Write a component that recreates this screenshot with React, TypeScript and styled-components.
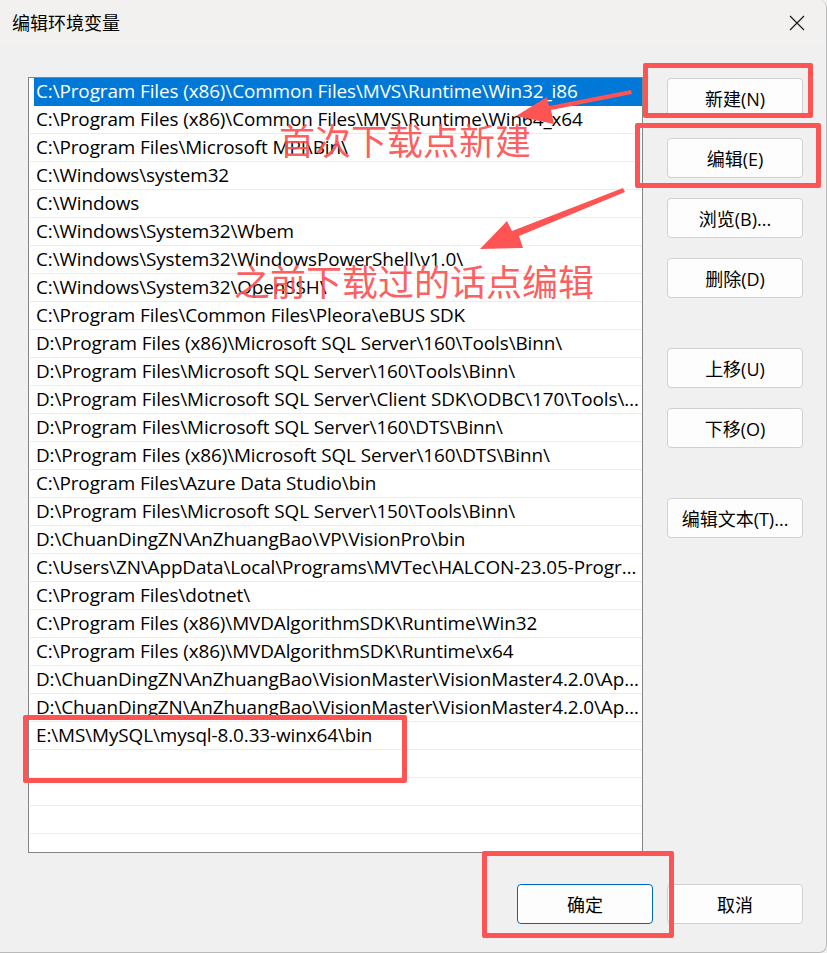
import styled, { createGlobalStyle } from 'styled-components';

const GlobalStyle = createGlobalStyle`
    html, body {
        margin: 0;
        padding: 0;
        background: #f0f0f0;
    }
    * { box-sizing: border-box; }
`

const UI_FONT = `"Segoe UI", "Open Sans", "Noto Sans CJK SC", sans-serif`

const StyledWindow = styled.div`
    position: relative;
    width: 827px;
    height: 953px;
    background-color: #f0f0f0;
    font-family: ${UI_FONT};
    color: #000;
    overflow: hidden;
    border-right: 1px solid #b9b9b9;
    border-bottom: 1px solid #b9b9b9;
    border-radius: 0 8px 8px 0;
`

const StyledTitleBar = styled.div`
    height: 45px;
    display: flex;
    align-items: center;
    justify-content: space-between;
    padding: 0 14px 0 12px;
    background-color: #f3f1ef;
`

const StyledTitle = styled.span`
    font-size: 18px;
    font-family: "Noto Sans CJK SC", sans-serif;
    margin-top: -2px;
`

const StyledClose = styled.button`
    width: 30px;
    height: 30px;
    border: none;
    background: transparent;
    padding: 0;
    display: flex;
    align-items: center;
    justify-content: center;
`

const StyledContent = styled.div`
    display: flex;
    align-items: flex-start;
    padding: 32px 0 0 28px;
`

const StyledList = styled.div`
    width: 615px;
    height: 776px;
    border: 1px solid #858585;
    background-color: #fff;
    overflow: hidden;
    padding-left: 1px;
`

const StyledRow = styled.div<{ $selected?: boolean }>`
    height: 28px;
    line-height: 27px;
    margin-left: ${p => p.$selected ? '4px' : '0'};
    padding-left: ${p => p.$selected ? '2px' : '6px'};
    padding-right: 2px;
    font-size: 18.9px;
    letter-spacing: -0.1px;
    white-space: nowrap;
    overflow: hidden;
    text-overflow: ellipsis;
    background-color: ${p => p.$selected ? '#0078d7' : 'transparent'};
    color: ${p => p.$selected ? '#fff' : '#000'};
    border-bottom: 1px solid ${p => p.$selected ? '#0078d7' : '#ececec'};
`

const StyledSide = styled.div`
    display: flex;
    flex-direction: column;
    margin-left: 24px;
    margin-top: 1px;
`

const StyledButton = styled.button<{ $gap?: number; $primary?: boolean }>`
    width: 136px;
    height: 40px;
    margin-top: ${p => p.$gap ?? 0}px;
    border-radius: 4px;
    border: 1px solid ${p => p.$primary ? '#0067c0' : '#d0d0d0'};
    background-color: #fdfdfd;
    font-family: ${UI_FONT};
    font-size: 18px;
    color: #000;
    padding: 0;
`

const StyledFooter = styled.div`
    display: flex;
    justify-content: flex-end;
    gap: 14px;
    padding: 31px 23px 0 0;
`

const StyledMarkBox = styled.div<{ $x: number; $y: number; $w: number; $h: number }>`
    position: absolute;
    left: ${p => p.$x}px;
    top: ${p => p.$y}px;
    width: ${p => p.$w}px;
    height: ${p => p.$h}px;
    border: 5px solid #fe5454;
    border-radius: 2px;
    pointer-events: none;
`

const StyledNote = styled.div<{ $x: number; $y: number }>`
    position: absolute;
    left: ${p => p.$x}px;
    top: ${p => p.$y}px;
    font-family: "Noto Sans CJK SC", sans-serif;
    font-size: 36px;
    line-height: 36px;
    color: rgba(252, 80, 80, 0.92);
    white-space: nowrap;
    pointer-events: none;
`

const StyledArrows = styled.svg`
    position: absolute;
    left: 0;
    top: 0;
    pointer-events: none;
`

const paths = [
    'C:\\Program Files (x86)\\Common Files\\MVS\\Runtime\\Win32_i86',
    'C:\\Program Files (x86)\\Common Files\\MVS\\Runtime\\Win64_x64',
    'C:\\Program Files\\Microsoft MPI\\Bin\\',
    'C:\\Windows\\system32',
    'C:\\Windows',
    'C:\\Windows\\System32\\Wbem',
    'C:\\Windows\\System32\\WindowsPowerShell\\v1.0\\',
    'C:\\Windows\\System32\\OpenSSH\\',
    'C:\\Program Files\\Common Files\\Pleora\\eBUS SDK',
    'D:\\Program Files (x86)\\Microsoft SQL Server\\160\\Tools\\Binn\\',
    'D:\\Program Files\\Microsoft SQL Server\\160\\Tools\\Binn\\',
    'D:\\Program Files\\Microsoft SQL Server\\Client SDK\\ODBC\\170\\Tools\\Binn\\',
    'D:\\Program Files\\Microsoft SQL Server\\160\\DTS\\Binn\\',
    'D:\\Program Files (x86)\\Microsoft SQL Server\\160\\DTS\\Binn\\',
    'C:\\Program Files\\Azure Data Studio\\bin',
    'D:\\Program Files\\Microsoft SQL Server\\150\\Tools\\Binn\\',
    'D:\\ChuanDingZN\\AnZhuangBao\\VP\\VisionPro\\bin',
    'C:\\Users\\ZN\\AppData\\Local\\Programs\\MVTec\\HALCON-23.05-Progress\\bin\\x64-win64',
    'C:\\Program Files\\dotnet\\',
    'C:\\Program Files (x86)\\MVDAlgorithmSDK\\Runtime\\Win32',
    'C:\\Program Files (x86)\\MVDAlgorithmSDK\\Runtime\\x64',
    'D:\\ChuanDingZN\\AnZhuangBao\\VisionMaster\\VisionMaster4.2.0\\Applications\\Module(sp)\\x64',
    'D:\\ChuanDingZN\\AnZhuangBao\\VisionMaster\\VisionMaster4.2.0\\Applications\\ThirdLib',
    'E:\\MS\\MySQL\\mysql-8.0.33-winx64\\bin',
    '',
    '',
    '',
    '',
]

const sideButtons = [
    { label: '新建(N)', gap: 0 },
    { label: '编辑(E)', gap: 20 },
    { label: '浏览(B)...', gap: 20 },
    { label: '删除(D)', gap: 20 },
    { label: '上移(U)', gap: 50 },
    { label: '下移(O)', gap: 20 },
    { label: '编辑文本(T)...', gap: 50 },
]

export default function App() {
    return (
        <>
            <GlobalStyle />
            <StyledWindow>
                <StyledTitleBar>
                    <StyledTitle>编辑环境变量</StyledTitle>
                    <StyledClose aria-label="关闭">
                        <svg width="16" height="16" viewBox="0 0 16 16">
                            <path d="M1 1 L15 15 M15 1 L1 15" stroke="#1a1a1a" strokeWidth="1.2" fill="none" />
                        </svg>
                    </StyledClose>
                </StyledTitleBar>

                <StyledContent>
                    <StyledList>
                        {paths.map((p, i) => (
                            <StyledRow key={i} $selected={i === 0}>{p || '\u00a0'}</StyledRow>
                        ))}
                    </StyledList>
                    <StyledSide>
                        {sideButtons.map(b => (
                            <StyledButton key={b.label} $gap={b.gap}>{b.label}</StyledButton>
                        ))}
                    </StyledSide>
                </StyledContent>

                <StyledFooter>
                    <StyledButton $primary>确定</StyledButton>
                    <StyledButton>取消</StyledButton>
                </StyledFooter>

                {/* annotations drawn on top of the screenshot */}
                <StyledMarkBox $x={643} $y={63} $w={170} $h={55} />
                <StyledMarkBox $x={635} $y={123} $w={186} $h={65} />
                <StyledMarkBox $x={23} $y={715} $w={384} $h={68} />
                <StyledMarkBox $x={482} $y={851} $w={192} $h={87} />

                <StyledNote $x={279} $y={121}>首次下载点新建</StyledNote>
                <StyledNote $x={234} $y={262}>之前下载过的话点编辑</StyledNote>

                <StyledArrows width="827" height="953" viewBox="0 0 827 953">
                    <polygon
                        fill="#fe5454"
                        points="631,90 632,94 551,110 554,124 516,116 547,97 549,106"
                    />
                    <polygon
                        fill="#fe5454"
                        points="623,188 625,192 519,236 523,248 480,249 507,221 512,231"
                    />
                </StyledArrows>
            </StyledWindow>
        </>
    )
}
